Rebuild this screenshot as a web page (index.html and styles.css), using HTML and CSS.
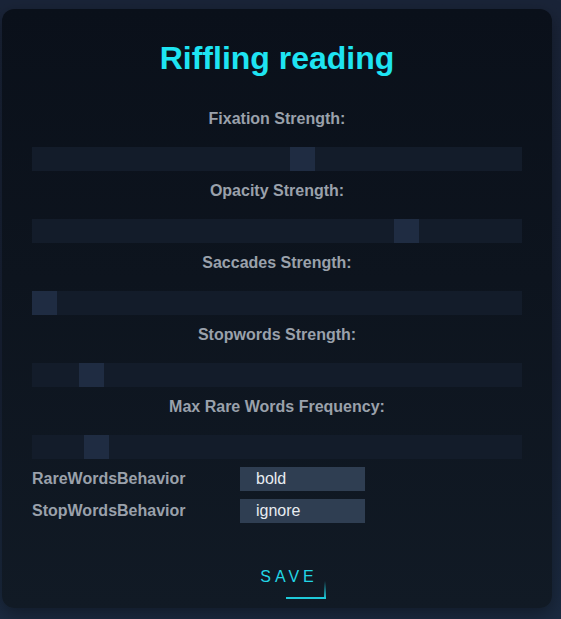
FILE: index.html
```html
<!DOCTYPE html>
<html>
<head>
<meta charset="utf-8">
<link rel="stylesheet" href="styles.css">
</head>
<body>
<div class="card">
  <h1 class="title">Riffling reading</h1>

  <div class="field">
    <div class="label">Fixation Strength:</div>
    <div class="track"><div class="thumb" style="margin-left:258px"></div></div>
  </div>
  <div class="field">
    <div class="label">Opacity Strength:</div>
    <div class="track"><div class="thumb" style="margin-left:362px"></div></div>
  </div>
  <div class="field">
    <div class="label">Saccades Strength:</div>
    <div class="track"><div class="thumb" style="margin-left:0px"></div></div>
  </div>
  <div class="field">
    <div class="label">Stopwords Strength:</div>
    <div class="track"><div class="thumb" style="margin-left:47px"></div></div>
  </div>
  <div class="field">
    <div class="label">Max Rare Words Frequency:</div>
    <div class="track"><div class="thumb" style="margin-left:52px"></div></div>
  </div>

  <div class="rows">
    <div class="row">
      <span class="row-label">RareWordsBehavior</span>
      <div class="select">bold</div>
    </div>
    <div class="row">
      <span class="row-label">StopWordsBehavior</span>
      <div class="select">ignore</div>
    </div>
  </div>

  <div class="actions">
    <button class="save">SAVE</button>
  </div>
</div>
</body>
</html>
```

FILE: styles.css
```css
html, body {
  margin: 0;
  padding: 0;
}
body {
  background: #19233a;
  background: linear-gradient(180deg, #1a2438 0%, #182236 60%, #1b2a40 100%);
  min-height: 619px;
  font-family: "Liberation Sans", Arial, sans-serif;
  padding: 9px 0 0 2px;
  box-sizing: border-box;
}
.card {
  width: 550px;
  height: 599px;
  box-sizing: border-box;
  border-radius: 12px;
  background: linear-gradient(180deg, #0a101a 0%, #0d141e 45%, #111a25 100%);
  box-shadow: 0 6px 18px rgba(0, 0, 0, 0.35);
  padding: 31px 30px 0;
  display: flex;
  flex-direction: column;
}
.title {
  margin: 0;
  font-size: 32px;
  line-height: 37px;
  font-weight: 700;
  color: #1ee4f2;
  text-align: center;
}
.field {
  display: flex;
  flex-direction: column;
}
.field:first-of-type {
  margin-top: 32px;
}
.field + .field {
  margin-top: 10px;
}
.label {
  font-size: 16px;
  line-height: 18px;
  padding-top: 1px;
  font-weight: 700;
  color: #9aa1ab;
  text-align: center;
}
.track {
  margin-top: 19px;
  height: 24px;
  background: #131c2a;
  display: flex;
}
.thumb {
  width: 25px;
  height: 24px;
  background: #1f2c42;
}
.rows {
  margin-top: 8px;
  display: flex;
  flex-direction: column;
  gap: 8px;
}
.row {
  display: flex;
  align-items: center;
}
.row-label {
  width: 208px;
  font-size: 16px;
  line-height: 18px;
  font-weight: 700;
  color: #9aa1ab;
  margin-top: -1px;
}
.select {
  width: 125px;
  height: 24px;
  box-sizing: border-box;
  padding-left: 16px;
  background: #2f3e52;
  color: #e8ecf1;
  font-size: 16px;
  line-height: 24px;
}
.actions {
  display: flex;
  justify-content: center;
  margin-top: 40px;
}
.save {
  position: relative;
  background: none;
  border: none;
  font-family: "Liberation Sans", Arial, sans-serif;
  font-size: 16px;
  letter-spacing: 4px;
  color: #22d6e6;
  padding: 5px 8px 13px 12px;
  margin-left: 20px;
  line-height: 18px;
}
.save::before {
  content: "";
  position: absolute;
  right: 0;
  bottom: 0;
  width: 40px;
  height: 2px;
  background: #1fc9d9;
}
.save::after {
  content: "";
  position: absolute;
  right: 0;
  bottom: 0;
  width: 2px;
  height: 18px;
  background: linear-gradient(180deg, rgba(31, 201, 217, 0) 0%, #1fc9d9 100%);
}
```
